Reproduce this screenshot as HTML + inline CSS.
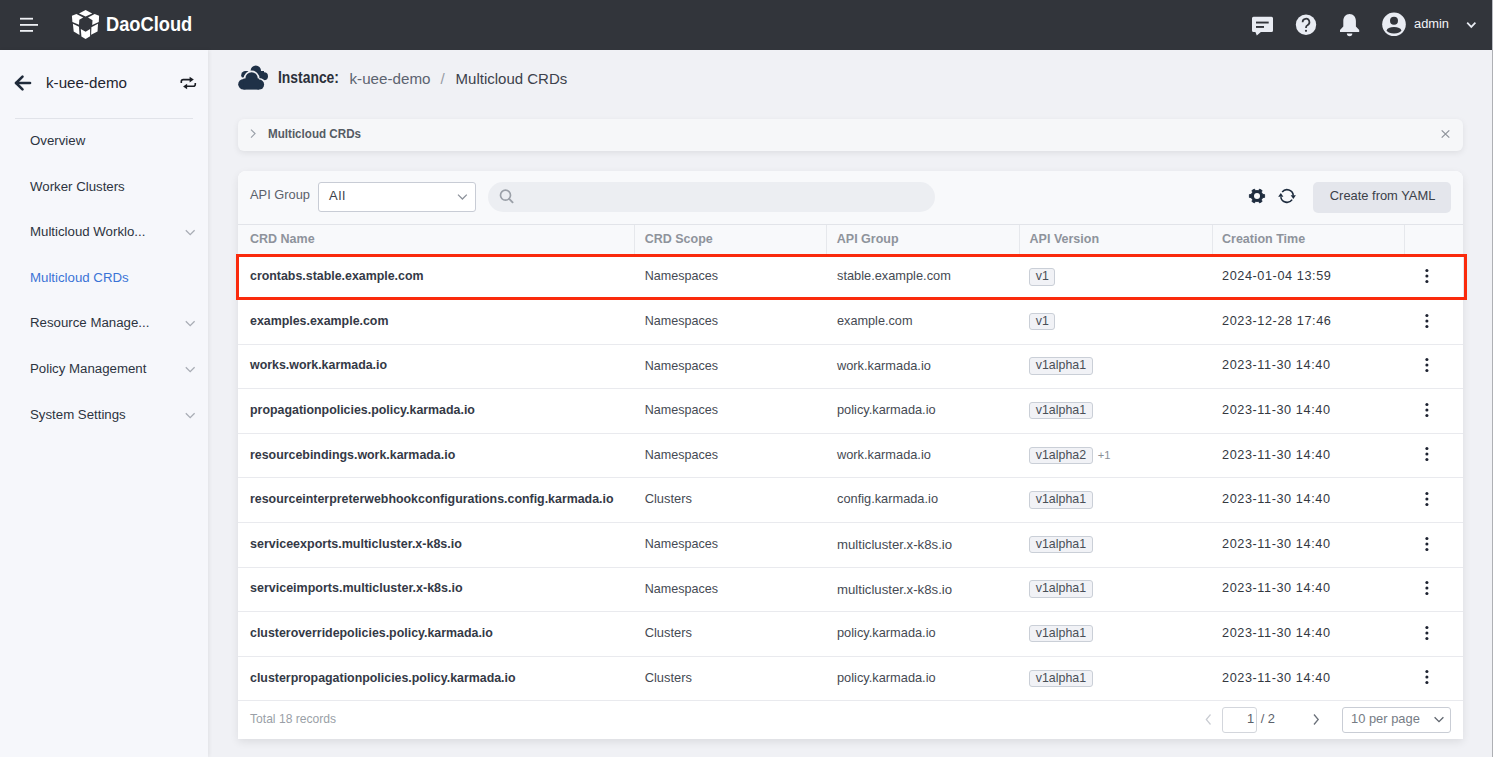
<!DOCTYPE html>
<html><head><meta charset="utf-8">
<style>
*{box-sizing:border-box;margin:0;padding:0}
html,body{width:1493px;height:757px;overflow:hidden;background:#f0f1f5;font-family:"Liberation Sans",sans-serif;color:#2b2f36}
.a{position:absolute;white-space:nowrap;line-height:1}
svg{position:absolute;overflow:visible}
.hdr{position:absolute;left:0;top:0;width:1493px;height:50px;background:#32353b}
.side{position:absolute;left:0;top:50px;width:208px;height:707px;background:#f6f7fb;box-shadow:1px 0 4px rgba(0,0,0,.07)}
.mi{position:absolute;left:30px;font-size:13.25px;color:#2c3340;line-height:1;white-space:nowrap}
.bar{position:absolute;left:238px;top:119px;width:1225px;height:32px;background:#f6f7f9;border-radius:6px;box-shadow:0 2px 6px rgba(0,0,0,.08)}
.card{position:absolute;left:238px;top:171px;width:1225px;height:568px;background:#fff;border-radius:8px 8px 0 0;box-shadow:0 3px 8px rgba(0,0,0,.085);overflow:hidden}
.tb{position:absolute;left:0;top:0;width:1225px;height:53px;background:#f8f9fb}
.th{position:absolute;left:0;top:54px;width:1225px;height:29.4px;background:#f8f9fb}
.vs{position:absolute;width:1px;background:#e6e8ec}
.hl{position:absolute;left:0;width:1225px;height:1px;background:#e9eaee}
.ht{position:absolute;font-size:12.5px;font-weight:bold;color:#8e939b;line-height:1;white-space:nowrap}
.nm{position:absolute;left:12px;font-size:12.4px;font-weight:bold;color:#343946;line-height:1;white-space:nowrap}
.tx{position:absolute;font-size:12.6px;color:#454a53;line-height:1;white-space:nowrap}
.tag{position:absolute;height:17.6px;border:1px solid #cacfd7;background:#f1f2f6;border-radius:3px;font-size:12.4px;color:#4a4f57;line-height:15.6px;padding:0 5.6px;white-space:nowrap}
.kb{position:absolute;width:3px;height:14px}
.kb i{display:block;width:3px;height:3px;border-radius:50%;background:#2b2f36;margin-bottom:2.5px}
</style></head><body>
<div class="hdr"></div>
<div class="side"></div>

<svg style="left:0;top:0" width="60" height="50"><g fill="#eef0f4"><rect x="20" y="17.8" width="13" height="1.8"/><rect x="20" y="24" width="18" height="1.8"/><rect x="20" y="30" width="13" height="1.8"/></g></svg>
<svg style="left:0;top:0" width="110" height="50"><g fill="#ffffff">
<polygon points="85.6,10 92.2,13.5 85.6,16.4 79,13.5"/>
<polygon points="71.9,15.8 76.4,14 83.2,17.4 79.3,19.8 79,24.8 72.4,21.9"/>
<polygon points="99.1,15.8 94.6,14 88,17.4 92.5,20.3 92.2,25 98.8,21.9"/>
<polygon points="72.9,23.8 79,26.7 79.5,35.1 73.7,31.4"/>
<polygon points="98,23.8 91.4,27.2 91.1,34.8 97.5,31.4"/>
<polygon points="80.8,29 85.6,31.7 90.1,29 90.1,36.2 85.6,39.1 81.4,36.4"/>
</g></svg>
<div class="a" style="left:105.5px;top:13px;font-size:21px;font-weight:bold;color:#fff;transform-origin:0 0;transform:scaleX(0.87)">DaoCloud</div>
<svg style="left:1250px;top:14px" width="26" height="24"><path fill="#e9ecf3" d="M3.5,2.8 h18 a1.5,1.5 0 0 1 1.5,1.5 v12.2 a1.5,1.5 0 0 1 -1.5,1.5 H10.9 L6.8,21.6 L5.4,18 H3.5 a1.5,1.5 0 0 1 -1.5,-1.5 v-12.2 a1.5,1.5 0 0 1 1.5,-1.5z"/>
<rect x="6" y="7.6" width="12.7" height="1.9" fill="#32353b"/><rect x="6" y="12" width="8" height="1.9" fill="#32353b"/></svg>
<svg style="left:1290px;top:9px" width="32" height="32"><circle cx="16" cy="15.8" r="10.2" fill="#e9ecf3"/>
<path d="M12.6,13.2 a3.4,3.4 0 1 1 4.9,3 c-1,0.5 -1.5,1.1 -1.5,2.2 v0.6" stroke="#32353b" stroke-width="1.7" fill="none"/><circle cx="16" cy="21.8" r="1.1" fill="#32353b"/></svg>
<svg style="left:1336px;top:10px" width="28" height="30"><path fill="#e9ecf3" d="M13.6,4 c3.8,0 6.3,3 6.3,7 v5.5 l3.3,3.6 v1.8 h-19.2 v-1.8 l3.3,-3.6 v-5.5 c0,-4 2.5,-7 6.3,-7z"/><path fill="#e9ecf3" d="M10.9,23.5 h5.4 a2.7,2.7 0 0 1 -5.4,0z"/></svg>
<svg style="left:1380px;top:10px" width="30" height="30"><circle cx="14" cy="14.3" r="11.8" fill="#e9ecf3"/><circle cx="14" cy="10.7" r="4" fill="#32353b"/><ellipse cx="14" cy="20.3" rx="7.2" ry="3.2" fill="#32353b"/></svg>
<div class="a" style="left:1414px;top:18px;font-size:12.85px;color:#f2f4f8">admin</div>
<svg style="left:1460px;top:15px" width="24" height="20"><path d="M7.2,7.6 l4.1,4.3 l4.1,-4.3" stroke="#e9ecf3" stroke-width="1.7" fill="none"/></svg>
<svg style="left:0;top:60px" width="40" height="40"><path d="M16,23 h14" stroke="#1f2a3a" stroke-width="2.6" stroke-linecap="round"/><path d="M22.5,16.6 l-6.4,6.4 l6.4,6.4" stroke="#1f2a3a" stroke-width="2.6" fill="none" stroke-linecap="round" stroke-linejoin="round"/></svg>
<div class="a" style="left:46px;top:75px;font-size:15.2px;color:#1f2530">k-uee-demo</div>
<svg style="left:172px;top:68px" width="32" height="30"><g stroke="#1a1d24" stroke-width="1.6" fill="none">
<path d="M9.3,14.9 v-1.3 a2,2 0 0 1 2,-2 h7.2"/><path d="M23.3,14.9 v1.4 a2,2 0 0 1 -2,2 h-7.2"/></g>
<path d="M17.6,8.7 l4.2,2.85 l-4.2,2.85z" fill="#1a1d24"/><path d="M15.1,15.65 l-4,2.85 l4,2.85z" fill="#1a1d24"/></svg>
<div style="position:absolute;left:15px;top:118px;width:178px;height:1px;background:#e1e3e9"></div>
<div class="mi" style="top:133.5px;color:#2c3340">Overview</div>
<div class="mi" style="top:179.5px;color:#2c3340">Worker Clusters</div>
<div class="mi" style="top:224.5px;color:#2c3340">Multicloud Worklo...</div>
<svg style="left:180px;top:221.7px" width="20" height="20"><path d="M5.8,8.2 l4.4,4.4 l4.4,-4.4" stroke="#a9adb5" stroke-width="1.3" fill="none"/></svg>
<div class="mi" style="top:270.5px;color:#3a73d6">Multicloud CRDs</div>
<div class="mi" style="top:315.5px;color:#2c3340">Resource Manage...</div>
<svg style="left:180px;top:312.7px" width="20" height="20"><path d="M5.8,8.2 l4.4,4.4 l4.4,-4.4" stroke="#a9adb5" stroke-width="1.3" fill="none"/></svg>
<div class="mi" style="top:361.5px;color:#2c3340">Policy Management</div>
<svg style="left:180px;top:358.7px" width="20" height="20"><path d="M5.8,8.2 l4.4,4.4 l4.4,-4.4" stroke="#a9adb5" stroke-width="1.3" fill="none"/></svg>
<div class="mi" style="top:407.5px;color:#2c3340">System Settings</div>
<svg style="left:180px;top:404.7px" width="20" height="20"><path d="M5.8,8.2 l4.4,4.4 l4.4,-4.4" stroke="#a9adb5" stroke-width="1.3" fill="none"/></svg>
<svg style="left:230px;top:58px" width="45" height="40">
<g fill="#1f3147"><circle cx="25.8" cy="12.8" r="5.2"/><circle cx="34" cy="18.3" r="4"/><circle cx="15.4" cy="17.2" r="4.2"/><rect x="15.4" y="13" width="18.6" height="9.3"/></g>
<g fill="#f0f1f5"><circle cx="21.6" cy="20.5" r="7.9"/><circle cx="13.5" cy="26.3" r="7"/><circle cx="29.1" cy="26.6" r="6.7"/><rect x="13.5" y="20.5" width="15.6" height="12.8"/></g>
<g fill="#1f3147"><circle cx="21.6" cy="20.5" r="6.2"/><circle cx="13.5" cy="26.3" r="5.3"/><circle cx="29.1" cy="26.6" r="5"/><rect x="13.5" y="20.5" width="15.6" height="11.1"/></g>
</svg>
<div class="a" style="left:278px;top:70px;font-size:16px;font-weight:bold;color:#2b303a;transform-origin:0 0;transform:scaleX(0.868)">Instance:</div>
<div class="a" style="left:349.5px;top:70.5px;font-size:15.2px;color:#5c6370">k-uee-demo</div>
<div class="a" style="left:440.5px;top:70.5px;font-size:15.2px;color:#979ca4">/</div>
<div class="a" style="left:455.6px;top:70.5px;font-size:15px;color:#3c424c">Multicloud CRDs</div>
<div class="bar"></div>
<svg style="left:244px;top:124px" width="20" height="20"><path d="M7,5.6 l4,4 l-4,4" stroke="#9aa0a9" stroke-width="1.2" fill="none"/></svg>
<div class="a" style="left:268px;top:127.8px;font-size:12.5px;font-weight:bold;color:#555b64;transform-origin:0 0;transform:scaleX(0.93)">Multicloud CRDs</div>
<svg style="left:1435px;top:124px" width="20" height="20"><path d="M6.7,6.4 L14.3,13.6 M14.3,6.4 L6.7,13.6" stroke="#8f949c" stroke-width="1.3"/></svg>
<div class="card">
<div class="tb"></div>
<div class="hl" style="top:53px;background:#e2e4e9"></div>
<div class="th"></div>
<div class="a" style="left:12px;top:18.2px;font-size:12.85px;color:#5b616b">API Group</div>
<div style="position:absolute;left:80px;top:11px;width:158px;height:30px;border:1px solid #c8ccd5;border-radius:3px;background:#fff"></div>
<div class="a" style="left:91px;top:17.8px;font-size:13px;letter-spacing:0.8px;color:#3b4049">All</div>
<svg style="left:214px;top:14px" width="24" height="24"><path d="M6,9.6 l4.4,4.4 l4.4,-4.4" stroke="#8d929b" stroke-width="1.3" fill="none"/></svg>
<div style="position:absolute;left:250px;top:11px;width:447px;height:30px;border-radius:15px;background:#eceef2"></div>
<svg style="left:258px;top:15px" width="24" height="24"><circle cx="9.5" cy="9.2" r="5" stroke="#9ba0a8" stroke-width="1.7" fill="none"/><path d="M13.2,12.9 l3.4,3.4" stroke="#9ba0a8" stroke-width="1.9" stroke-linecap="round"/></svg>
<svg style="left:1007px;top:13.1px" width="24" height="24"><path transform="translate(0,0.84) scale(1,0.93)" fill="#1f2d3f" stroke="#1f2d3f" stroke-width="0.9" stroke-linejoin="round" d="M17.74,10.25 L19.6,10.47 L19.6,13.53 L17.74,13.75 L16.39,16.09 L17.1,17.85 L14.6,19.4 L13.35,17.85 L10.65,17.85 L9.4,19.4 L6.9,17.85 L7.61,16.09 L6.26,13.75 L4.4,13.53 L4.4,10.47 L6.26,10.25 L7.61,7.91 L6.9,6.15 L9.4,4.6 L10.65,6.15 L13.35,6.15 L14.6,4.6 L17.1,6.15 L16.39,7.91Z"/>
<circle cx="12" cy="12" r="3" fill="#f8f9fb"/></svg>
<svg style="left:1036.8px;top:13px" width="24" height="24"><g stroke="#1f2d3f" stroke-width="1.6" fill="none">
<path d="M7.17,7.95 A6.3,6.3 0 0 1 18.28,11.6"/><path d="M17.16,15.61 A6.3,6.3 0 0 1 5.8,13.09"/></g>
<path d="M15.7,11.2 L20.9,11.2 L18.3,14.9Z" fill="#1f2d3f"/><path d="M3.2,12.8 L8.4,12.8 L5.8,9.1Z" fill="#1f2d3f"/></svg>
<div style="position:absolute;left:1075px;top:11px;width:138px;height:31px;border-radius:5px;background:#e4e6ec"></div>
<div class="a" style="left:1091.8px;top:19.2px;font-size:12.9px;color:#3b4049">Create from YAML</div>
<div class="vs" style="left:396px;top:54px;height:29.4px"></div>
<div class="vs" style="left:588.4px;top:54px;height:29.4px"></div>
<div class="vs" style="left:780.5px;top:54px;height:29.4px"></div>
<div class="vs" style="left:973.5px;top:54px;height:29.4px"></div>
<div class="vs" style="left:1165.5px;top:54px;height:29.4px"></div>
<div class="ht" style="left:12px;top:61.5px">CRD Name</div>
<div class="ht" style="left:406.7px;top:61.5px">CRD Scope</div>
<div class="ht" style="left:598.8px;top:61.5px">API Group</div>
<div class="ht" style="left:791.6px;top:61.5px">API Version</div>
<div class="ht" style="left:984px;top:61.5px">Creation Time</div>
<div class="hl" style="top:83.4px"></div>
<div class="nm" style="top:99.1px;font-size:12.4px">crontabs.stable.example.com</div>
<div class="tx" style="left:406.7px;top:99.4px;font-size:12.55px">Namespaces</div>
<div class="tx" style="left:599px;top:99.3px;font-size:12.8px">stable.example.com</div>
<div class="tag" style="left:791.2px;top:97.1px">v1</div>
<div class="tx" style="left:984px;top:99.1px;font-size:12.7px;letter-spacing:0.58px;color:#34383f">2024-01-04 13:59</div>
<svg style="left:1179px;top:95.00px" width="20" height="20"><g fill="#1d2230"><circle cx="9.9" cy="4.45" r="1.55"/><circle cx="9.9" cy="10" r="1.55"/><circle cx="9.9" cy="15.55" r="1.55"/></g></svg>
<div class="hl" style="top:128.0px"></div>
<div class="nm" style="top:143.7px;font-size:12.4px">examples.example.com</div>
<div class="tx" style="left:406.7px;top:144.0px;font-size:12.55px">Namespaces</div>
<div class="tx" style="left:599px;top:143.9px;font-size:12.7px">example.com</div>
<div class="tag" style="left:791.2px;top:141.7px">v1</div>
<div class="tx" style="left:984px;top:143.7px;font-size:12.7px;letter-spacing:0.58px;color:#34383f">2023-12-28 17:46</div>
<svg style="left:1179px;top:139.60px" width="20" height="20"><g fill="#1d2230"><circle cx="9.9" cy="4.45" r="1.55"/><circle cx="9.9" cy="10" r="1.55"/><circle cx="9.9" cy="15.55" r="1.55"/></g></svg>
<div class="hl" style="top:172.6px"></div>
<div class="nm" style="top:188.3px;font-size:12.4px">works.work.karmada.io</div>
<div class="tx" style="left:406.7px;top:188.6px;font-size:12.55px">Namespaces</div>
<div class="tx" style="left:599px;top:188.5px;font-size:12.8px">work.karmada.io</div>
<div class="tag" style="left:791.2px;top:186.3px">v1alpha1</div>
<div class="tx" style="left:984px;top:188.3px;font-size:12.7px;letter-spacing:0.58px;color:#34383f">2023-11-30 14:40</div>
<svg style="left:1179px;top:184.20px" width="20" height="20"><g fill="#1d2230"><circle cx="9.9" cy="4.45" r="1.55"/><circle cx="9.9" cy="10" r="1.55"/><circle cx="9.9" cy="15.55" r="1.55"/></g></svg>
<div class="hl" style="top:217.2px"></div>
<div class="nm" style="top:232.9px;font-size:12.4px">propagationpolicies.policy.karmada.io</div>
<div class="tx" style="left:406.7px;top:233.2px;font-size:12.55px">Namespaces</div>
<div class="tx" style="left:599px;top:233.1px;font-size:12.8px">policy.karmada.io</div>
<div class="tag" style="left:791.2px;top:230.9px">v1alpha1</div>
<div class="tx" style="left:984px;top:232.9px;font-size:12.7px;letter-spacing:0.58px;color:#34383f">2023-11-30 14:40</div>
<svg style="left:1179px;top:228.80px" width="20" height="20"><g fill="#1d2230"><circle cx="9.9" cy="4.45" r="1.55"/><circle cx="9.9" cy="10" r="1.55"/><circle cx="9.9" cy="15.55" r="1.55"/></g></svg>
<div class="hl" style="top:261.8px"></div>
<div class="nm" style="top:277.5px;font-size:12.4px">resourcebindings.work.karmada.io</div>
<div class="tx" style="left:406.7px;top:277.8px;font-size:12.55px">Namespaces</div>
<div class="tx" style="left:599px;top:277.7px;font-size:12.8px">work.karmada.io</div>
<div class="tag" style="left:791.2px;top:275.5px">v1alpha2</div>
<div class="a" style="left:859.7px;top:278.9px;font-size:11.2px;color:#8b9098">+1</div>
<div class="tx" style="left:984px;top:277.5px;font-size:12.7px;letter-spacing:0.58px;color:#34383f">2023-11-30 14:40</div>
<svg style="left:1179px;top:273.40px" width="20" height="20"><g fill="#1d2230"><circle cx="9.9" cy="4.45" r="1.55"/><circle cx="9.9" cy="10" r="1.55"/><circle cx="9.9" cy="15.55" r="1.55"/></g></svg>
<div class="hl" style="top:306.4px"></div>
<div class="nm" style="top:322.1px;font-size:12.4px">resourceinterpreterwebhookconfigurations.config.karmada.io</div>
<div class="tx" style="left:406.7px;top:322.4px;font-size:12.9px">Clusters</div>
<div class="tx" style="left:599px;top:322.3px;font-size:12.8px">config.karmada.io</div>
<div class="tag" style="left:791.2px;top:320.1px">v1alpha1</div>
<div class="tx" style="left:984px;top:322.1px;font-size:12.7px;letter-spacing:0.58px;color:#34383f">2023-11-30 14:40</div>
<svg style="left:1179px;top:318.00px" width="20" height="20"><g fill="#1d2230"><circle cx="9.9" cy="4.45" r="1.55"/><circle cx="9.9" cy="10" r="1.55"/><circle cx="9.9" cy="15.55" r="1.55"/></g></svg>
<div class="hl" style="top:351.0px"></div>
<div class="nm" style="top:366.7px;font-size:12.5px">serviceexports.multicluster.x-k8s.io</div>
<div class="tx" style="left:406.7px;top:367.0px;font-size:12.55px">Namespaces</div>
<div class="tx" style="left:599px;top:366.9px;font-size:13.2px">multicluster.x-k8s.io</div>
<div class="tag" style="left:791.2px;top:364.7px">v1alpha1</div>
<div class="tx" style="left:984px;top:366.7px;font-size:12.7px;letter-spacing:0.58px;color:#34383f">2023-11-30 14:40</div>
<svg style="left:1179px;top:362.60px" width="20" height="20"><g fill="#1d2230"><circle cx="9.9" cy="4.45" r="1.55"/><circle cx="9.9" cy="10" r="1.55"/><circle cx="9.9" cy="15.55" r="1.55"/></g></svg>
<div class="hl" style="top:395.6px"></div>
<div class="nm" style="top:411.3px;font-size:12.5px">serviceimports.multicluster.x-k8s.io</div>
<div class="tx" style="left:406.7px;top:411.6px;font-size:12.55px">Namespaces</div>
<div class="tx" style="left:599px;top:411.5px;font-size:13.2px">multicluster.x-k8s.io</div>
<div class="tag" style="left:791.2px;top:409.3px">v1alpha1</div>
<div class="tx" style="left:984px;top:411.3px;font-size:12.7px;letter-spacing:0.58px;color:#34383f">2023-11-30 14:40</div>
<svg style="left:1179px;top:407.20px" width="20" height="20"><g fill="#1d2230"><circle cx="9.9" cy="4.45" r="1.55"/><circle cx="9.9" cy="10" r="1.55"/><circle cx="9.9" cy="15.55" r="1.55"/></g></svg>
<div class="hl" style="top:440.2px"></div>
<div class="nm" style="top:455.9px;font-size:12.4px">clusteroverridepolicies.policy.karmada.io</div>
<div class="tx" style="left:406.7px;top:456.2px;font-size:12.9px">Clusters</div>
<div class="tx" style="left:599px;top:456.1px;font-size:12.8px">policy.karmada.io</div>
<div class="tag" style="left:791.2px;top:453.9px">v1alpha1</div>
<div class="tx" style="left:984px;top:455.9px;font-size:12.7px;letter-spacing:0.58px;color:#34383f">2023-11-30 14:40</div>
<svg style="left:1179px;top:451.80px" width="20" height="20"><g fill="#1d2230"><circle cx="9.9" cy="4.45" r="1.55"/><circle cx="9.9" cy="10" r="1.55"/><circle cx="9.9" cy="15.55" r="1.55"/></g></svg>
<div class="hl" style="top:484.8px"></div>
<div class="nm" style="top:500.5px;font-size:12.4px">clusterpropagationpolicies.policy.karmada.io</div>
<div class="tx" style="left:406.7px;top:500.8px;font-size:12.9px">Clusters</div>
<div class="tx" style="left:599px;top:500.7px;font-size:12.8px">policy.karmada.io</div>
<div class="tag" style="left:791.2px;top:498.5px">v1alpha1</div>
<div class="tx" style="left:984px;top:500.5px;font-size:12.7px;letter-spacing:0.58px;color:#34383f">2023-11-30 14:40</div>
<svg style="left:1179px;top:496.40px" width="20" height="20"><g fill="#1d2230"><circle cx="9.9" cy="4.45" r="1.55"/><circle cx="9.9" cy="10" r="1.55"/><circle cx="9.9" cy="15.55" r="1.55"/></g></svg>
<div class="hl" style="top:529.4px"></div>
<div class="a" style="left:12px;top:542.0px;font-size:12.1px;color:#9a9fa7">Total 18 records</div>
<svg style="left:962px;top:536px" width="20" height="26"><path d="M10.5,7.5 l-4.2,5 l4.2,5" stroke="#c9ccd2" stroke-width="1.2" fill="none"/></svg>
<div style="position:absolute;left:984px;top:536px;width:35px;height:25.5px;border:1px solid #d3d6dc;border-radius:3px"></div>
<div class="a" style="left:1009px;top:542px;font-size:12.9px;color:#5b616b">1</div>
<div class="a" style="left:1022.7px;top:542px;font-size:12.9px;color:#5b616b">/ 2</div>
<svg style="left:1071px;top:536px" width="20" height="26"><path d="M5,7.5 l4.2,5 l-4.2,5" stroke="#6b717a" stroke-width="1.3" fill="none"/></svg>
<div style="position:absolute;left:1104px;top:536px;width:109px;height:25.5px;border:1px solid #c9cdd5;border-radius:3px"></div>
<div class="a" style="left:1113px;top:542px;font-size:12.9px;color:#767c85">10 per page</div>
<svg style="left:1190px;top:536px" width="24" height="26"><path d="M6.6,10.2 l4.4,4.4 l4.4,-4.4" stroke="#5f656e" stroke-width="1.3" fill="none"/></svg>
</div>
<div style="position:absolute;left:236px;top:254px;width:1231px;height:46px;border:3px solid #fa2a0c"></div>
<div style="position:absolute;left:1492px;top:0;width:1px;height:50px;background:#b9bcc2"></div><div style="position:absolute;left:1492px;top:50px;width:1px;height:707px;background:#aeb0b4"></div>
</body></html>
